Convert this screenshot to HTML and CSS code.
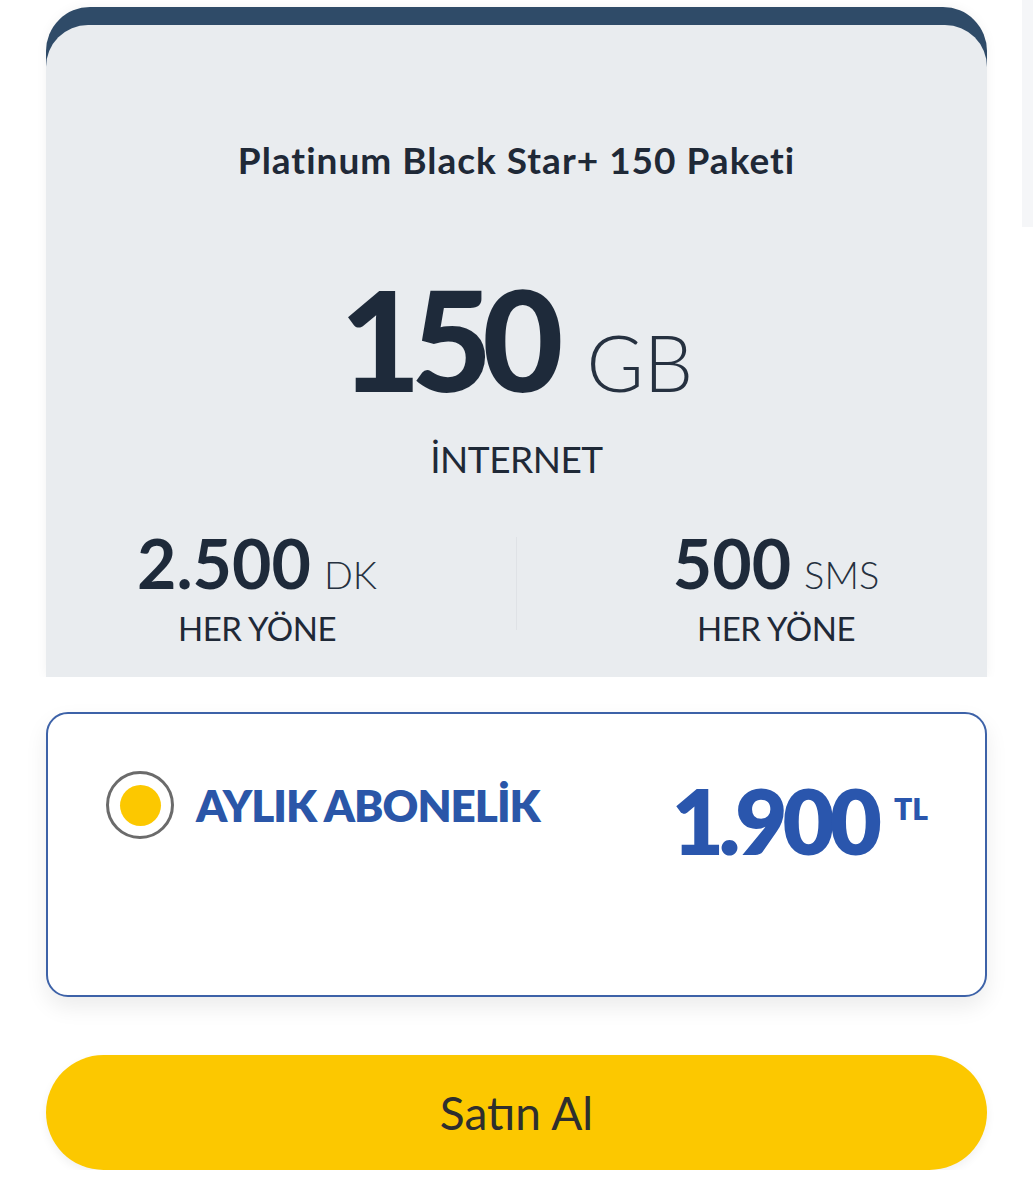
FILE: index.html
```html
<!DOCTYPE html>
<html lang="tr">
<head>
  <meta charset="UTF-8">
  <meta name="viewport" content="width=device-width, initial-scale=1.0">
  <title>Platinum Black Star+ 150 Paketi</title>
  <link rel="stylesheet" href="styles.css">
</head>
<body>
  <div class="carousel">
    <div class="package">
      <div class="panel">
        <h1 class="package-title">Platinum Black Star+ 150 Paketi</h1>

        <div class="data">
          <span class="data-amount">150</span>
          <span class="data-unit">GB</span>
        </div>
        <p class="data-label">İNTERNET</p>

        <div class="stats">
          <div class="stat">
            <div class="stat-value"><strong>2.500</strong><span>DK</span></div>
            <div class="stat-label">HER YÖNE</div>
          </div>
          <div class="divider"></div>
          <div class="stat">
            <div class="stat-value"><strong>500</strong><span>SMS</span></div>
            <div class="stat-label">HER YÖNE</div>
          </div>
        </div>
      </div>
    </div>
    <div class="package next"></div>
  </div>

  <div class="content">
    <label class="option">
      <div class="plan">
        <span class="radio"><span class="dot"></span></span>
        <span class="plan-name">AYLIK ABONELİK</span>
      </div>
      <div class="price">
        <span class="price-amount">1.900</span>
        <span class="price-currency">TL</span>
      </div>
    </label>

    <button class="buy">Satın Al</button>
  </div>
</body>
</html>
```

FILE: styles.css
```css
body {
  margin: 0;
  background: #ffffff;
  font-family: Lato, "Noto Sans", sans-serif;
  color: #1f2a38;
  overflow: hidden;
}

.carousel {
  display: flex;
  align-items: flex-start;
  gap: 35px;
  padding-left: 46px;
  overflow: hidden;
}

.package {
  flex: 0 0 941px;
  margin-top: 7px;
  background: #2f4b68;
  border-radius: 44px 44px 0 0;
  box-shadow: 0 0 12px rgba(0, 0, 0, 0.05);
}

.package.next {
  margin-top: 0;
  height: 227px;
  background: #f5f6f8;
  border-radius: 0;
  box-shadow: none;
}

.panel {
  margin-top: 18px;
  background: #e9ecef;
  border-radius: 42px 42px 0 0;
  padding: 115px 0 27px;
  text-align: center;
}

.package-title {
  margin: 0;
  font-size: 37px;
  line-height: 40px;
  font-weight: 700;
  letter-spacing: 1px;
  color: #1f2937;
}

.data {
  margin-top: 86px;
  line-height: 145px;
  height: 145px;
}

.data-amount {
  font-size: 140px;
  font-weight: 900;
  letter-spacing: -10px;
  color: #1e2a3a;
}

.data-unit {
  margin-left: 29px;
  font-size: 78px;
  font-weight: 300;
  color: #263140;
}

.data-label {
  margin: 24px 0 0;
  font-size: 37px;
  line-height: 48px;
  font-weight: 400;
  letter-spacing: -0.5px;
  color: #1f2937;
}

.stats {
  margin-top: 45px;
  display: grid;
  grid-template-columns: 1fr 1px 1fr;
  column-gap: 48px;
}

.stat-value {
  display: flex;
  justify-content: center;
  align-items: baseline;
  gap: 13px;
  height: 70px;
  line-height: 70px;
}

.stat-value strong {
  font-size: 68px;
  font-weight: 700;
  color: #1e2a3a;
}

.stat-value span {
  font-size: 38px;
  font-weight: 300;
  color: #263140;
}

.stat-label {
  margin-top: 8px;
  font-size: 33px;
  line-height: 44px;
  font-weight: 400;
  letter-spacing: -0.5px;
  color: #1f2937;
}

.divider {
  margin-top: 9px;
  height: 93px;
  background: #dfe2e6;
}

.content {
  padding: 35px 46px 0;
}

.option {
  display: flex;
  justify-content: space-between;
  align-items: flex-start;
  height: 285px;
  padding: 57px 57px 0 58px;
  box-sizing: border-box;
  background: #ffffff;
  border: 2px solid #3d62a8;
  border-radius: 22px;
  box-shadow: 0 10px 22px rgba(0, 0, 0, 0.08);
  cursor: pointer;
}

.plan {
  display: flex;
  align-items: center;
  gap: 22px;
}

.radio {
  display: flex;
  justify-content: center;
  align-items: center;
  width: 68px;
  height: 68px;
  box-sizing: border-box;
  border: 3px solid #6b6b6b;
  border-radius: 50%;
}

.dot {
  width: 41px;
  height: 41px;
  border-radius: 50%;
  background: #fcc800;
}

.plan-name {
  font-size: 44px;
  line-height: 46px;
  font-weight: 800;
  letter-spacing: -1px;
  color: #2a56a8;
}

.price {
  display: flex;
  align-items: flex-start;
  gap: 17px;
  margin-top: 4px;
  color: #2a56ad;
}

.price-amount {
  font-size: 90px;
  line-height: 90px;
  font-weight: 800;
  letter-spacing: -5px;
}

.price-currency {
  margin-top: 18px;
  font-size: 30px;
  line-height: 30px;
  font-weight: 800;
}

.buy {
  display: block;
  width: 100%;
  height: 115px;
  margin-top: 58px;
  border: none;
  border-radius: 58px;
  background: #fcc800;
  color: #2e2e2e;
  font-family: Lato, "Noto Sans", sans-serif;
  font-size: 46px;
  font-weight: 400;
  box-shadow: 0 4px 10px rgba(0, 0, 0, 0.06);
  cursor: pointer;
}
```
